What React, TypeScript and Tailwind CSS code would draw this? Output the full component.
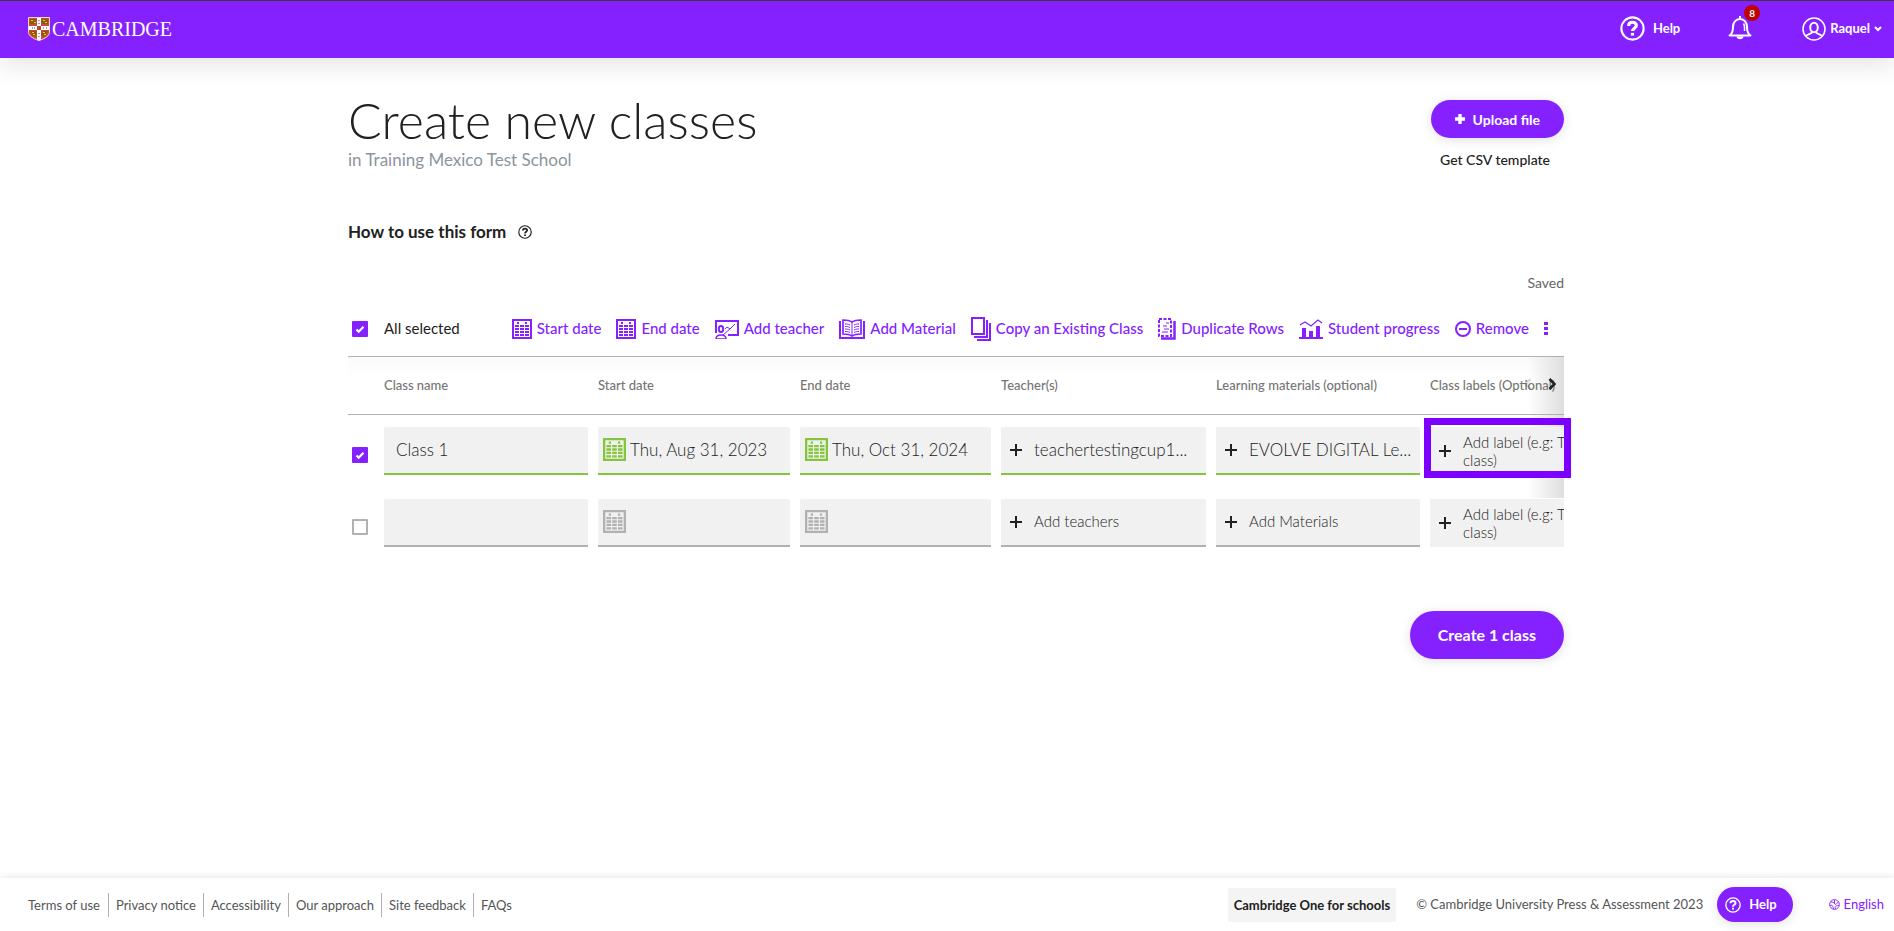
import { useState } from 'react';
import type { ReactNode } from 'react';
import clsx from 'clsx';

type ClassRow = {
  id: number;
  selected: boolean;
  name: string;
  start: string;
  end: string;
  teachers: string;
  materials: string;
};

const initialRows: ClassRow[] = [
  {
    id: 1,
    selected: true,
    name: 'Class 1',
    start: 'Thu, Aug 31, 2023',
    end: 'Thu, Oct 31, 2024',
    teachers: 'teachertestingcup1...',
    materials: 'EVOLVE DIGITAL Le...',
  },
  { id: 2, selected: false, name: '', start: '', end: '', teachers: '', materials: '' },
];

const footerLinks = [
  'Terms of use',
  'Privacy notice',
  'Accessibility',
  'Our approach',
  'Site feedback',
  'FAQs',
];

function Crest() {
  return (
    <svg width="22" height="24" viewBox="0 0 22 24" aria-hidden="true">
      <path d="M.5.5h21v15c0 3-4 6-10.500 8C4.500 21.500.5 18.500.5 15.500z" fill="#c8502c" stroke="#f3d9c8" />
      <path d="M2 2h6v5H2zM14 2h6v5h-6zM2 14h6v5H4zM14 14h6l-2 5h-4z" fill="#8a5a0c" />
      <path d="M3 3h2v1H3zM6 5h2v1H6zM15 3h2v1h-2zM17 5h2v1h-2zM4 15h2v1H4zM5 17h2v1H5zM15 15h2v1h-2zM16 17h2v1h-2z" fill="#f4c430" />
      <path d="M9 1h4v8h8v4h-8v10l-2 .5-2-.5V13H1V9h8z" fill="#fff" />
      <path d="M8.500 1v7.500H1M13.500 1v7.500H21M8.500 22v-8.500H1M13.500 22v-8.500H21" fill="none" stroke="#d2413a" />
      <path d="M9 9h4v4H9z" fill="#b5482a" />
      <path d="M11 3v1M11 6v1M11 16v1M11 19v1M4 11h1M6 11h1M15 11h1M18 11h1" stroke="#444" />
    </svg>
  );
}

function QuestionCircle({ size, stroke }: { size: number; stroke: number }) {
  return (
    <svg width={size} height={size} viewBox="0 0 24 24" fill="none" stroke="currentColor" strokeWidth={stroke} aria-hidden="true">
      <circle cx="12" cy="12" r="10.700" />
      <path d="M8.300 9.500c0-2.200 1.600-3.500 3.700-3.500s3.700 1.300 3.700 3.200c0 2.400-3.700 2.600-3.700 5.300" strokeWidth={stroke + 1} />
      <path d="M12 16.200v2.600" strokeWidth={stroke + 1} />
    </svg>
  );
}

function BellIcon() {
  return (
    <svg width="24" height="25" viewBox="0 0 24 25" fill="none" stroke="currentColor" strokeWidth="2" aria-hidden="true">
      <path d="M12 0v3M1.500 19.500h21c-3-2-3.500-4-3.500-8.500 0-4.500-2.700-8-7-8s-7 3.500-7 8c0 4.500-.5 6.500-3.500 8.500z" strokeLinejoin="round" />
      <path d="M15.500 7.500c1 1.500 1.200 4 1 7.500" strokeWidth="1.500" />
      <path d="M8.500 20.500c.3 3.500 6.700 3.500 7 0z" fill="currentColor" stroke="none" />
    </svg>
  );
}

function UserIcon() {
  return (
    <svg width="24" height="24" viewBox="0 0 24 24" fill="none" stroke="currentColor" aria-hidden="true">
      <circle cx="12" cy="12" r="11" strokeWidth="1.500" />
      <ellipse cx="12" cy="10.500" rx="3.800" ry="4.800" strokeWidth="2" />
      <path d="M10 15c0 2-5 2-6 4M14 15c0 2 5 2 6 4" strokeWidth="2" />
    </svg>
  );
}

function CalendarIcon({ size = 20 }: { size?: number }) {
  return (
    <svg width={size} height={size} viewBox="0 0 20 20" fill="none" stroke="currentColor" strokeWidth="2" aria-hidden="true">
      <path d="M1 1h18v18H1z" />
      <path d="M5 4h2M13 4h2M3 7h4M8 7h4M13 7h4M3 10h4M8 10h4M13 10h4M3 13h4M8 13h4M13 13h4M3 16h4M8 16h4M13 16h4" />
    </svg>
  );
}

function TeacherIcon() {
  return (
    <svg width="24" height="20" viewBox="0 0 24 20" fill="none" stroke="currentColor" aria-hidden="true">
      <path d="M1 14V2h22v14H13" strokeWidth="2" />
      <ellipse cx="6" cy="10" rx="2.200" ry="3" strokeWidth="2" />
      <path d="M1 20c0-4 3-4 5-4s5 0 5 4z" strokeWidth="1.500" />
      <path d="M8 16l8-7M10 10l2-2 3 2 5-5" />
    </svg>
  );
}

function BookIcon() {
  return (
    <svg width="26" height="20" viewBox="0 0 26 20" fill="none" stroke="currentColor" aria-hidden="true">
      <path d="M1 2v17h24V2" strokeWidth="2" />
      <path d="M13 3C10 1 7 1 4 1v14c3 0 6 0 9 2 3-2 6-2 9-2V1c-3 0-6 0-9 2z" strokeWidth="1.700" />
      <path d="M13 3v14" strokeWidth="1" />
      <path d="M6 5c2 0 3 0 5 1M6 7.500c2 0 3 0 5 1M6 10c2 0 3 0 5 1M6 12.500c2 0 3 0 5 1M20 5c-2 0-3 0-5 1M20 7.500c-2 0-3 0-5 1M20 10c-2 0-3 0-5 1M20 12.500c-2 0-3 0-5 1" />
    </svg>
  );
}

function CopyIcon() {
  return (
    <svg width="20" height="24" viewBox="0 0 20 24" fill="none" stroke="currentColor" strokeWidth="2" aria-hidden="true">
      <path d="M1 1h12v16H1zM16 3v17H3M19 6v17H6" />
    </svg>
  );
}

function DuplicateIcon() {
  return (
    <svg width="18" height="22" viewBox="0 0 18 22" fill="none" stroke="currentColor" strokeWidth="2" aria-hidden="true">
      <path d="M1 1h12v17H1z" strokeDasharray="3 1.500" />
      <path d="M16.500 3v17.500H3" strokeWidth="2.500" />
      <path d="M8 5h3M5 8h4M6 11h5M4 14h6" strokeWidth="1" />
    </svg>
  );
}

function ProgressIcon() {
  return (
    <svg width="24" height="20" viewBox="0 0 24 20" aria-hidden="true">
      <path d="M0 18h24v2H0zM3 9h4v9H3zM10 12h4v6h-4zM17 7h4v11h-4z" fill="currentColor" />
      <path d="M1 6l5-3 6 4L19 1l4 3" fill="none" stroke="currentColor" strokeWidth="1.200" />
    </svg>
  );
}

function RemoveIcon() {
  return (
    <svg width="16" height="16" viewBox="0 0 16 16" fill="none" stroke="currentColor" strokeWidth="2" aria-hidden="true">
      <circle cx="8" cy="8" r="7" />
      <path d="M4 8h8" />
    </svg>
  );
}

function PlusIcon({ size = 12, stroke = 2 }: { size?: number; stroke?: number }) {
  return (
    <svg width={size} height={size} viewBox="0 0 12 12" stroke="currentColor" strokeWidth={stroke} className="shrink-0" aria-hidden="true">
      <path d="M6 0v12M0 6h12" />
    </svg>
  );
}

function GlobeIcon() {
  return (
    <svg width="11" height="11" viewBox="0 0 12 12" fill="none" stroke="currentColor" aria-hidden="true">
      <circle cx="6" cy="6" r="5.300" />
      <path d="M2 3c2 1 3 0 4 2s3 0 4-2M1 7c3-1 3 1 4 4M7 11c-1-3 1-4 4-4M6 1v4" />
    </svg>
  );
}

function Checkbox({ label, checked, onChange }: { label: string; checked: boolean; onChange: () => void }) {
  return (
    <span className="grid size-4 shrink-0">
      <input
        type="checkbox"
        aria-label={label}
        checked={checked}
        onChange={onChange}
        className="col-start-1 row-start-1 size-4 appearance-none rounded-[1px] border-2 border-[#b1b1b1] bg-white checked:border-[#8521ff] checked:bg-[#8521ff]"
      />
      {checked && (
        <svg viewBox="0 0 16 16" className="pointer-events-none col-start-1 row-start-1 size-4" aria-hidden="true">
          <path d="M4.500 8.500l2.200 2.200 4.800-5" fill="none" stroke="#fff" strokeWidth="2.200" />
        </svg>
      )}
    </span>
  );
}

function ToolButton({ icon, children }: { icon: ReactNode; children: ReactNode }) {
  return (
    <button type="button" className="flex items-center gap-[5px] whitespace-nowrap">
      {icon}
      {children}
    </button>
  );
}

function DateField({ label, value }: { label: string; value: string }) {
  return (
    <div
      className={clsx(
        'flex h-12 items-center gap-1 rounded-t-xs border-b-2 bg-[#f1f1f1] pl-[5px]',
        value ? 'border-[#84c53b] text-[#84c53b]' : 'border-[#b1b1b1] text-[#b1b1b1]',
      )}
    >
      <span className="shrink-0">
        <CalendarIcon size={23} />
      </span>
      <input aria-label={label} defaultValue={value} className="w-full min-w-0 text-[17px] font-light text-[#212121]" />
    </div>
  );
}

function AddField({ value, placeholder }: { value: string; placeholder: string }) {
  return (
    <button
      type="button"
      className={clsx(
        'flex h-12 w-full items-center gap-3 border-b-2 bg-[#f1f1f1] pl-[9px] text-left font-light whitespace-nowrap text-[#212121]',
        value ? 'border-[#84c53b] text-[17px]' : 'border-[#b1b1b1] text-[15px]',
      )}
    >
      <PlusIcon />
      {value || placeholder}
    </button>
  );
}

export default function App() {
  const [rows, setRows] = useState(initialRows);
  const [allSelected, setAllSelected] = useState(true);
  const selectedCount = rows.filter((r) => r.selected).length;

  const toggleRow = (id: number) =>
    setRows((prev) => prev.map((r) => (r.id === id ? { ...r, selected: !r.selected } : r)));

  return (
    <div className="flex min-h-screen flex-col bg-white font-['Lato','Open_Sans',sans-serif] text-[#212121]">
      {/* Top bar */}
      <header className="flex h-[58px] items-center justify-between border-t border-[#3a3a3a] bg-[#8521ff] pr-3 pb-[2px] pl-7 text-white shadow-[0_8px_24px_rgba(0,0,0,0.1)]">
        <a href="#" className="flex items-center gap-[2px] font-['Liberation_Serif',serif] text-[20px]">
          <Crest />
          CAMBRIDGE
        </a>
        <div className="flex items-center text-[13px] font-bold">
          <button type="button" className="mr-12 flex items-center gap-2">
            <QuestionCircle size={25} stroke={2} />
            Help
          </button>
          <button type="button" aria-label="Notifications" className="relative mr-[50px]">
            <BellIcon />
            <span className="absolute -top-[11px] left-4 flex size-4 items-center justify-center rounded-full bg-[#c00000] text-[10px]">
              8
            </span>
          </button>
          <button type="button" className="flex items-center gap-1">
            <UserIcon />
            Raquel
            <svg width="8" height="6" viewBox="0 0 8 6" fill="none" stroke="currentColor" strokeWidth="2" aria-hidden="true">
              <path d="M1 1l3 3 3-3" />
            </svg>
          </button>
        </div>
      </header>

      <main className="mx-auto w-full max-w-[1234px] flex-1 pt-[34px] pl-[18px]">
        <div className="flex justify-between">
          <div>
            <h1 className="text-[50px] leading-[56px] font-light">Create new classes</h1>
            <p className="text-[17px] leading-6 text-[#8b959e]">in Training Mexico Test School</p>
          </div>
          <div className="flex flex-col items-end pt-2">
            <button type="button" className="flex h-[38px] items-center gap-2 rounded-full bg-[#8521ff] px-6 text-[14px] font-bold text-white shadow-[0_2px_12px_rgba(0,0,0,0.12)]">
              <PlusIcon size={10} stroke={4} />
              Upload file
            </button>
            <a href="#" className="mt-3 mr-[14px] text-[14px] leading-5 font-medium">
              Get CSV template
            </a>
          </div>
        </div>

        <div className="mt-12 flex items-center gap-3">
          <h2 className="text-[17px] leading-6 font-bold">How to use this form</h2>
          <button type="button" aria-label="How to use this form">
            <QuestionCircle size={14} stroke={2} />
          </button>
        </div>

        <p className="mt-[29px] text-right text-[14px] leading-5 text-[#666]">Saved</p>

        {/* Bulk actions */}
        <div className="mt-2 flex h-14 items-center border-b border-[#b1b1b1] pr-[16px] pl-1">
          <label className="flex items-center gap-4 text-[15px]">
            <Checkbox label="All selected" checked={allSelected} onChange={() => setAllSelected(!allSelected)} />
            All selected
          </label>
          <div className="flex flex-1 items-center justify-between pl-[52px] text-[15px] font-medium text-[#8521ff]">
            <ToolButton icon={<CalendarIcon />}>Start date</ToolButton>
            <ToolButton icon={<CalendarIcon />}>End date</ToolButton>
            <ToolButton icon={<TeacherIcon />}>Add teacher</ToolButton>
            <ToolButton icon={<BookIcon />}>Add Material</ToolButton>
            <ToolButton icon={<CopyIcon />}>Copy an Existing Class</ToolButton>
            <ToolButton icon={<DuplicateIcon />}>Duplicate Rows</ToolButton>
            <ToolButton icon={<ProgressIcon />}>Student progress</ToolButton>
            <ToolButton icon={<RemoveIcon />}>Remove</ToolButton>
            <button type="button" aria-label="More actions">
              <svg width="4" height="14" viewBox="0 0 4 14" fill="currentColor" aria-hidden="true">
                <path d="M0 0h4v3H0zM0 5h4v3H0zM0 10h4v3H0z" />
              </svg>
            </button>
          </div>
        </div>

        <div className="relative">
          <div className="relative overflow-hidden bg-linear-to-b from-[#fafafa] to-white to-10%">
            <div className="absolute top-0 right-0 h-[141px] w-9 bg-linear-to-r from-transparent to-[#dedede]" />
            <table className="relative w-[1296px] table-fixed border-collapse text-left">
              <colgroup>
                <col className="w-9" />
                <col className="w-[214px]" />
                <col className="w-[202px]" />
                <col className="w-[201px]" />
                <col className="w-[215px]" />
                <col className="w-[214px]" />
                <col className="w-[214px]" />
              </colgroup>
              <thead>
                <tr className="h-[57px] border-b border-[#b1b1b1] text-[13px] text-[#757575] [&>th]:font-medium">
                  <td />
                  <th>Class name</th>
                  <th>Start date</th>
                  <th>End date</th>
                  <th>Teacher(s)</th>
                  <th>Learning materials (optional)</th>
                  <th>Class labels (Optional)</th>
                </tr>
              </thead>
              <tbody>
                {rows.map((row, i) => (
                  <tr
                    key={row.id}
                    className={clsx('[&>td]:pt-3 [&>td]:pr-[10px] [&>td]:align-top', i < rows.length - 1 && '[&>td]:pb-3')}
                  >
                    <td>
                      <div className="pt-5 pl-1">
                        <Checkbox label={`Select row ${row.id}`} checked={row.selected} onChange={() => toggleRow(row.id)} />
                      </div>
                    </td>
                    <td>
                      <input
                        aria-label="Class name"
                        defaultValue={row.name}
                        className={clsx(
                          'block h-12 w-full rounded-t-xs border-b-2 bg-[#f1f1f1] px-3 text-[17px] font-light text-[#212121]',
                          row.name ? 'border-[#84c53b]' : 'border-[#b1b1b1]',
                        )}
                      />
                    </td>
                    <td>
                      <DateField label="Start date" value={row.start} />
                    </td>
                    <td>
                      <DateField label="End date" value={row.end} />
                    </td>
                    <td>
                      <AddField value={row.teachers} placeholder="Add teachers" />
                    </td>
                    <td>
                      <AddField value={row.materials} placeholder="Add Materials" />
                    </td>
                    <td>
                      <button type="button" className="flex h-12 w-full items-center gap-3 bg-[#f1f1f1] pl-[9px] text-left text-[15px] leading-[18px] font-light text-[#212121]">
                        <PlusIcon />
                        <span>
                          Add label (e.g: Team
                          <br />
                          class)
                        </span>
                      </button>
                    </td>
                  </tr>
                ))}
              </tbody>
            </table>
            <div className="absolute top-[21px] right-2 flex gap-4 text-[#212121]">
              <button type="button" aria-label="Scroll left" className="opacity-15">
                <svg width="8" height="12" viewBox="0 0 8 12" fill="none" stroke="currentColor" strokeWidth="2.500" aria-hidden="true">
                  <path d="M6.500 1l-5 5 5 5" />
                </svg>
              </button>
              <button type="button" aria-label="Scroll right">
                <svg width="8" height="12" viewBox="0 0 8 12" fill="none" stroke="currentColor" strokeWidth="2.500" aria-hidden="true">
                  <path d="M1.500 1l5 5-5 5" />
                </svg>
              </button>
            </div>
          </div>
          <div className="pointer-events-none absolute top-[61px] -right-[7px] h-[60px] w-[147px] border-7 border-[#7b00ff]" />
        </div>

        <div className="mt-16 flex justify-end pb-16">
          <button type="button" className="h-12 rounded-full bg-[#8521ff] px-7 text-base font-bold text-white shadow-[0_2px_12px_rgba(0,0,0,0.12)]">
            Create {selectedCount} class
          </button>
        </div>
      </main>

      <footer className="flex h-[53px] items-center justify-between bg-white pr-[10px] pl-7 text-[13px] text-[#555] shadow-[0_0_8px_rgba(0,0,0,0.12)]">
        <nav className="flex items-center">
          {footerLinks.map((text, i) => (
            <a key={text} href="#" className={clsx('py-[2px] leading-5', i > 0 ? 'border-l border-[#b1b1b1] px-[7px]' : 'pr-2')}>
              {text}
            </a>
          ))}
        </nav>
        <div className="flex items-center">
          <a href="#" className="bg-[#f4f4f4] px-[6px] py-[7px] leading-5 font-bold text-[#212121]">
            Cambridge One for schools
          </a>
          <span className="ml-5">© Cambridge University Press &amp; Assessment 2023</span>
          <button type="button" className="ml-[14px] flex h-[35px] items-center gap-2 rounded-full bg-[#8521ff] pr-4 pl-2 text-[13px] font-bold text-white shadow-[0_2px_12px_rgba(0,0,0,0.12)]">
            <QuestionCircle size={16} stroke={2} />
            Help
          </button>
          <button type="button" className="ml-9 flex items-center gap-1 text-[#8521ff]">
            <GlobeIcon />
            English
          </button>
        </div>
      </footer>
    </div>
  );
}
